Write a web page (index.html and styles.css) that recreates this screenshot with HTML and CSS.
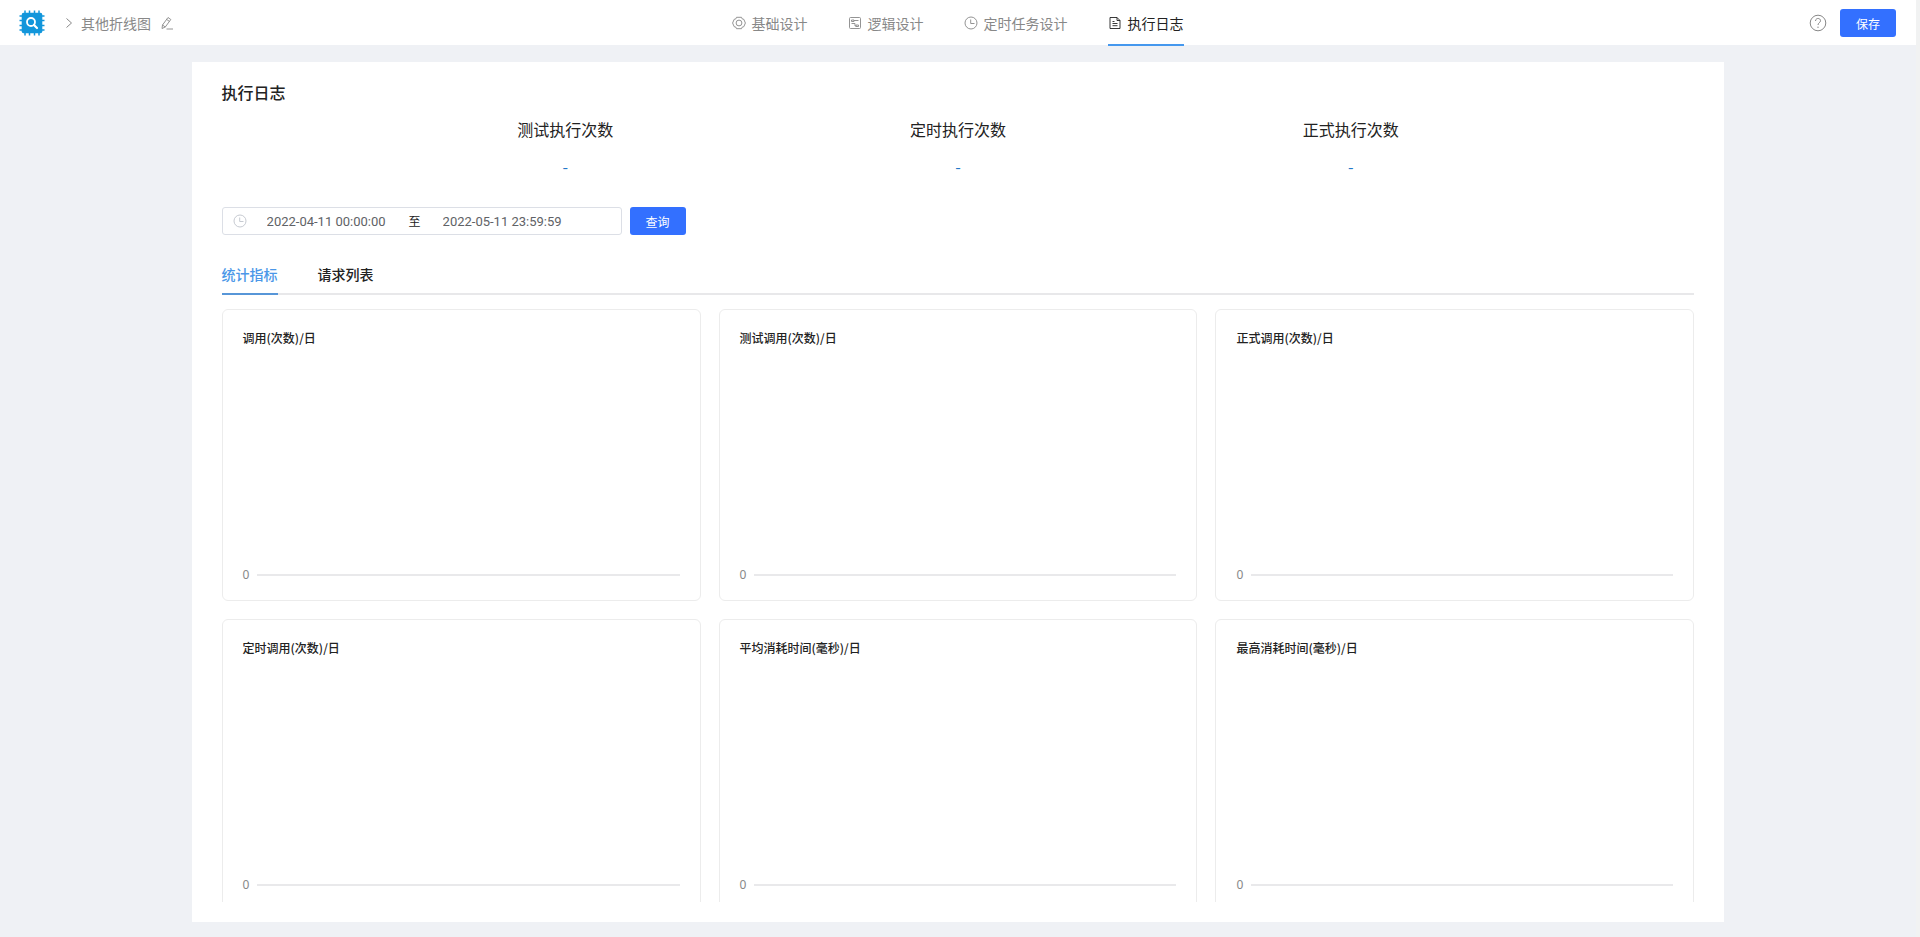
FILE: index.html
```html
<!DOCTYPE html>
<html lang="zh-CN">
<head>
<meta charset="utf-8">
<title>执行日志</title>
<link rel="stylesheet" href="styles.css">
</head>
<body>
<div class="page">
  <header class="header">
    <div class="crumbs">
      <svg class="logo" viewBox="0 0 26 26" aria-hidden="true">
        <path d="M6 .5v25M10.500 .5v25M15.500 .5v25M20 .5v25M.5 6h25M.5 10.500h25M.5 15.500h25M.5 20h25" stroke="#1296db" stroke-width="1.500"/>
        <rect x="2.700" y="2.700" width="20.600" height="20.600" rx="2" fill="#1296db" stroke="none"/>
        <circle cx="12" cy="12" r="4" fill="none" stroke="#fff" stroke-width="1.800"/>
        <path d="M15 15l3 3" stroke="#fff" stroke-width="2.200" stroke-linecap="round"/>
      </svg>
      <svg class="chevron" viewBox="0 0 8 12" aria-hidden="true"><path d="M1.500 1.500L6.500 6l-5 4.500"/></svg>
      <span class="name">其他折线图</span>
      <button class="icon-button" type="button" aria-label="编辑">
        <svg class="icon" viewBox="0 0 14 14"><path d="M2 12.500l.5-3.500L8 1.500l2.800 2L5.300 11zM6.600 3.400l2.800 2M2.500 9l2.800 2M6.500 13h6.500"/></svg>
      </button>
    </div>
    <nav class="nav">
      <a class="nav-item" href="#base"><svg class="icon" viewBox="0 0 14 14"><path d="M4.500 1.300h5l.7 1.600 1.600.4L13.400 7l-1.600 3.700-1.600.4-.7 1.600h-5l-.7-1.600-1.600-.4L.6 7l1.600-3.700 1.600-.4z"/><circle cx="7" cy="7" r="2.900"/></svg>基础设计</a>
      <a class="nav-item" href="#logic"><svg class="icon" viewBox="0 0 14 14"><rect x="1.500" y="1.500" width="11" height="11" rx="1"/><path d="M3.500 4h2.500v1.500H3.500zM6 4.500h4.500M3.500 7.500h3.500v2.500h1M8 9h2.500v1.500H8z"/></svg>逻辑设计</a>
      <a class="nav-item" href="#timer"><svg class="icon" viewBox="0 0 14 14"><circle cx="7" cy="7" r="6"/><path d="M6.700 3.500v4h3.800"/></svg>定时任务设计</a>
      <a class="nav-item active" href="#log" aria-current="page"><svg class="icon" viewBox="0 0 14 14"><path d="M2 1.500h7l3 3v8H2zM9 1.500v3h3M4.500 5.500h2M4.500 7.500h5M4.500 9.700h5"/></svg>执行日志</a>
    </nav>
    <div class="actions">
      <button class="icon-button" type="button" aria-label="帮助">
        <svg class="help" viewBox="0 0 18 18"><circle cx="9" cy="9" r="7.800"/><path d="M6.500 7c0-3.400 5-3.300 5-.3C11.500 8.700 9 8.800 9 11M9 12.600v1.400"/></svg>
      </button>
      <button class="primary" type="button">保存</button>
    </div>
  </header>
  <main class="main">
    <section class="panel">
      <h1 class="title">执行日志</h1>
      <dl class="stats">
        <div class="stat"><dt>测试执行次数</dt><dd>-</dd></div>
        <div class="stat"><dt>定时执行次数</dt><dd>-</dd></div>
        <div class="stat"><dt>正式执行次数</dt><dd>-</dd></div>
      </dl>
      <form class="filter">
        <div class="range">
          <svg class="icon" viewBox="0 0 14 14" aria-hidden="true"><circle cx="7" cy="7" r="6"/><path d="M6.700 3.500v4h3.800"/></svg>
          <input class="date" type="text" aria-label="开始时间" value="2022-04-11 00:00:00">
          <span class="to">至</span>
          <input class="date" type="text" aria-label="结束时间" value="2022-05-11 23:59:59">
        </div>
        <button class="primary" type="button">查询</button>
      </form>
      <div class="tabs" role="tablist">
        <button class="tab selected" type="button" role="tab" aria-selected="true">统计指标</button>
        <button class="tab" type="button" role="tab" aria-selected="false">请求列表</button>
      </div>
      <div class="charts">
        <article class="card"><h2>调用(次数)/日</h2><div class="axis"><span>0</span><i class="line"></i></div></article>
        <article class="card"><h2>测试调用(次数)/日</h2><div class="axis"><span>0</span><i class="line"></i></div></article>
        <article class="card"><h2>正式调用(次数)/日</h2><div class="axis"><span>0</span><i class="line"></i></div></article>
        <article class="card"><h2>定时调用(次数)/日</h2><div class="axis"><span>0</span><i class="line"></i></div></article>
        <article class="card"><h2>平均消耗时间(毫秒)/日</h2><div class="axis"><span>0</span><i class="line"></i></div></article>
        <article class="card"><h2>最高消耗时间(毫秒)/日</h2><div class="axis"><span>0</span><i class="line"></i></div></article>
      </div>
    </section>
  </main>
</div>
</body>
</html>
```
FILE: styles.css
```css
* {
  box-sizing: border-box;
}

body {
  margin: 0;
  font-family: "Noto Sans CJK SC", sans-serif;
  font-size: 14px;
  line-height: 20px;
  color: #222;
}

button,
input {
  font-family: inherit;
  padding: 0;
  border: 0;
  background: none;
}

svg {
  display: block;
  flex: none;
  fill: none;
  stroke: currentColor;
}

.page {
  height: 100vh;
  display: flex;
  flex-direction: column;
  background: #eff1f5;
  border-right: 4px solid #f1f2f2;
}

.header {
  flex: none;
  height: 45px;
  display: grid;
  grid-template-columns: 1fr auto 1fr;
  padding: 0 20px 0 19px;
  background: #fff;
}

.crumbs {
  display: flex;
  align-items: center;
  color: #888;
}

.logo {
  width: 26px;
  height: 26px;
}

.chevron {
  width: 8px;
  height: 12px;
  margin: 0 8px 0 20px;
}

.icon-button {
  color: #888;
}

.name {
  margin-right: 9px;
}

.icon {
  width: 14px;
  height: 14px;
  stroke-width: 0.9;
}

.nav {
  display: flex;
  gap: 40px;
  height: 46px;
}

.nav-item {
  display: flex;
  align-items: center;
  gap: 6px;
  padding-top: 2px;
  border-bottom: 2px solid transparent;
  color: #888;
  text-decoration: none;
}

.nav-item.active {
  color: #222;
  border-bottom-color: #4598ee;
}

.actions {
  display: flex;
  justify-content: flex-end;
  align-items: center;
  gap: 13px;
}

.help {
  width: 18px;
  height: 18px;
}

.primary {
  width: 56px;
  height: 28px;
  border-radius: 3px;
  background: #3370ff;
  color: #fff;
  font-size: 12px;
}

.main {
  flex: 1;
  min-height: 0;
  padding: 17px 10% 15px;
}

.panel {
  height: 100%;
  display: flex;
  flex-direction: column;
  padding: 19px 30px 20px;
  background: #fff;
}

.title {
  margin: 0;
  font-size: 16px;
  font-weight: 500;
  line-height: 22px;
}

.stats {
  display: grid;
  grid-template-columns: repeat(3, 1fr);
  margin: 14px 10% 0;
  text-align: center;
  font-size: 16px;
}

.stat dt {
  line-height: 24px;
}

.stat dd {
  margin: 13px 0 0;
  line-height: 24px;
  color: #2378c8;
}

.filter {
  display: flex;
  gap: 8px;
  margin-top: 29px;
}

.range {
  display: flex;
  align-items: center;
  width: 400px;
  height: 28px;
  padding: 0 10px;
  border: 1px solid #dcdfe6;
  border-radius: 3px;
  color: #c0c4cc;
}

.date {
  width: 144px;
  padding-left: 20px;
  font-family: Roboto, sans-serif;
  font-size: 13px;
  color: #606266;
}

.to {
  width: 32px;
  padding-left: 18px;
  font-size: 12px;
  color: #222;
}

.tabs {
  flex: none;
  display: flex;
  gap: 40px;
  height: 40px;
  margin-top: 20px;
  box-shadow: inset 0 -2px #e8e8ea;
}

.tab {
  border-bottom: 2px solid transparent;
  font-size: 14px;
  font-weight: 500;
  color: #222;
}

.tab.selected {
  color: #4b97e8;
  border-bottom-color: #5796d8;
}

.charts {
  flex: 1;
  min-height: 0;
  overflow: hidden;
  display: grid;
  grid-template-columns: repeat(3, 1fr);
  grid-auto-rows: 292px;
  gap: 18px;
  margin-top: 14px;
}

.card {
  display: flex;
  flex-direction: column;
  justify-content: space-between;
  padding: 18px 20px 15px;
  border: 1px solid #ececec;
  border-radius: 6px;
}

.card h2 {
  margin: 0;
  font-size: 12px;
  font-weight: 500;
  line-height: 20px;
}

.axis {
  display: flex;
  align-items: center;
  gap: 8px;
  font-family: "Noto Sans", sans-serif;
  font-size: 12px;
  color: #888;
}

.line {
  flex: 1;
  height: 2px;
  background: #e9e9eb;
}
```
